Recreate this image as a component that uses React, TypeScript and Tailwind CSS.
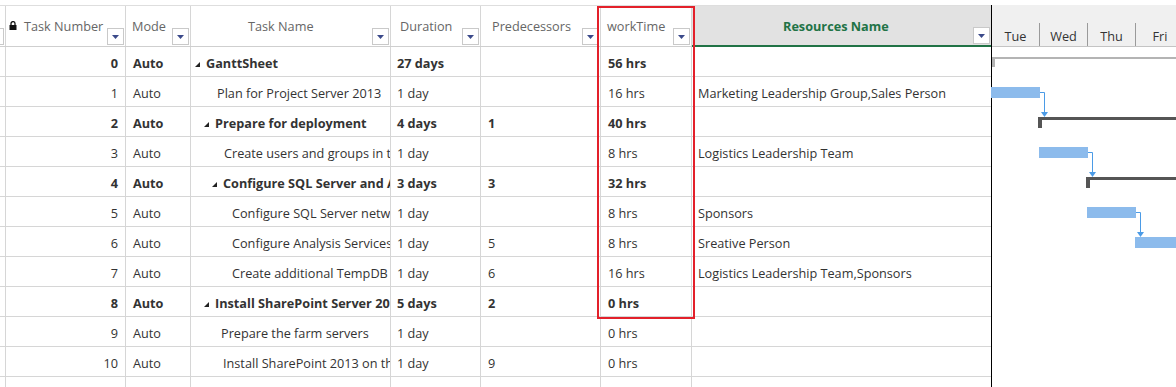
import React from "react";

type Row = {
  n: number;
  bold?: boolean;
  arrow?: boolean;
  name: string;
  pl: number;
  dur: string;
  pred: string;
  wt: string;
  res: string;
};

const rows: Row[] = [
  { n: 0, bold: true, arrow: true, name: "GanttSheet", pl: 17, dur: "27 days", pred: "", wt: "56 hrs", res: "" },
  { n: 1, name: "Plan for Project Server 2013", pl: 26, dur: "1 day", pred: "", wt: "16 hrs", res: "Marketing Leadership Group,Sales Person" },
  { n: 2, bold: true, arrow: true, name: "Prepare for deployment", pl: 26, dur: "4 days", pred: "1", wt: "40 hrs", res: "" },
  { n: 3, name: "Create users and groups in the Active Directory", pl: 33, dur: "1 day", pred: "", wt: "8 hrs", res: "Logistics Leadership Team" },
  { n: 4, bold: true, arrow: true, name: "Configure SQL Server and Analysis Services", pl: 34, dur: "3 days", pred: "3", wt: "32 hrs", res: "" },
  { n: 5, name: "Configure SQL Server network settings", pl: 41, dur: "1 day", pred: "", wt: "8 hrs", res: "Sponsors" },
  { n: 6, name: "Configure Analysis Services settings", pl: 41, dur: "1 day", pred: "5", wt: "8 hrs", res: "Sreative Person" },
  { n: 7, name: "Create additional TempDB files", pl: 41, dur: "1 day", pred: "6", wt: "16 hrs", res: "Logistics Leadership Team,Sponsors" },
  { n: 8, bold: true, arrow: true, name: "Install SharePoint Server 2013", pl: 26, dur: "5 days", pred: "2", wt: "0 hrs", res: "" },
  { n: 9, name: "Prepare the farm servers", pl: 30, dur: "1 day", pred: "", wt: "0 hrs", res: "" },
  { n: 10, name: "Install SharePoint 2013 on the farm servers", pl: 32, dur: "1 day", pred: "9", wt: "0 hrs", res: "" },
];

const FilterBtn = () => (
  <div className="w-[17px] h-[17px] border border-[#c9c9c9] bg-white flex items-center justify-center shrink-0 self-end mb-[1px] mr-[1px]">
    <svg width="7" height="4" viewBox="0 0 7 4" className="mt-[1px]">
      <polygon points="0,0 7,0 3.5,4" fill="#3b4a8a" />
    </svg>
  </div>
);

const Arrow = () => (
  <svg width="5" height="5" viewBox="0 0 5 5" className="shrink-0 mr-[6px] mt-[1px]">
    <polygon points="5,0 5,5 0,5" fill="#222" />
  </svg>
);

const Lock = () => (
  <svg width="8" height="9" viewBox="0 0 8 9" className="shrink-0 mr-[7px] -mt-[3px]">
    <path d="M2,4 V2.6 A2,2 0 0 1 6,2.6 V4" fill="none" stroke="#111" strokeWidth="1.3" />
    <rect x="0.5" y="4" width="7" height="5" fill="#111" />
  </svg>
);

const cellBase = "h-full border-r border-[#d6d6d6] flex items-center overflow-hidden whitespace-nowrap pt-[4px]";

export default function App() {
  return (
    <div
      className="w-[1176px] h-[387px] bg-white overflow-hidden text-[12.7px] text-[#333] relative"
      style={{ fontFamily: '"Segoe UI", "Open Sans", "Noto Sans", sans-serif' }}
    >
      <div className="h-[5px]" />
      <div className="flex">
        {/* Grid */}
        <div className="w-[991px] shrink-0">
          {/* header */}
          <div className="flex h-[42px] border-t border-[#dedede] border-b border-b-[#cfcfcf] text-[#666]">
            <div className="w-[6px] border-r border-[#d6d6d6] flex items-end">
              <div className="w-[4px] h-[17px] border border-l-0 border-[#c9c9c9] mb-[1px]" />
            </div>
            <div className="w-[120px] border-r border-[#d6d6d6] flex">
              <div className="flex-1 flex items-center pl-[3px] pt-[2px]">
                <Lock />
                <span>Task Number</span>
              </div>
              <FilterBtn />
            </div>
            <div className="w-[65px] border-r border-[#d6d6d6] flex">
              <div className="flex-1 flex items-center pl-[6px] pt-[2px]">Mode</div>
              <FilterBtn />
            </div>
            <div className="w-[200px] border-r border-[#d6d6d6] flex">
              <div className="flex-1 flex items-center pl-[57px] pt-[2px]">Task Name</div>
              <FilterBtn />
            </div>
            <div className="w-[90px] border-r border-[#d6d6d6] flex">
              <div className="flex-1 flex items-center pl-[9px] pt-[2px]">Duration</div>
              <FilterBtn />
            </div>
            <div className="w-[120px] border-r border-[#d6d6d6] flex">
              <div className="flex-1 flex items-center pl-[11px] pt-[2px]">Predecessors</div>
              <FilterBtn />
            </div>
            <div className="w-[91px] border-r border-[#d6d6d6] flex">
              <div className="flex-1 flex items-center pl-[6px] pt-[2px]">workTime</div>
              <FilterBtn />
            </div>
            <div className="w-[299px] bg-[#e2e2e2] flex border-b-2 border-[#217346] -mb-[1px]">
              <div className="flex-1 flex items-center pl-[91px] pt-[2px] font-bold text-[#217346]">Resources Name</div>
              <FilterBtn />
            </div>
          </div>
          {/* rows */}
          {rows.map((r) => (
            <div
              key={r.n}
              className={`flex h-[30px] border-b border-[#d6d6d6] ${r.bold ? "font-bold" : ""}`}
            >
              <div className={`w-[6px] ${cellBase}`} />
              <div className={`w-[120px] ${cellBase} justify-end pr-[7px]`}>{r.n}</div>
              <div className={`w-[65px] ${cellBase} pl-[7px]`}>Auto</div>
              <div className={`w-[200px] ${cellBase}`} style={{ paddingLeft: r.arrow ? r.pl - 13 : r.pl }}>
                {r.arrow && <Arrow />}
                <span className="min-w-0 overflow-hidden whitespace-nowrap">{r.name}</span>
              </div>
              <div className={`w-[90px] ${cellBase} pl-[6px]`}>{r.dur}</div>
              <div className={`w-[120px] ${cellBase} pl-[7px]`}>{r.pred}</div>
              <div className={`w-[91px] ${cellBase} pl-[7px]`}>{r.wt}</div>
              <div className={`w-[299px] ${cellBase} pl-[6px] border-r-0 font-normal`}>{r.res}</div>
            </div>
          ))}
          <div className="flex h-[30px]">
            <div className="w-[6px] border-r border-[#d6d6d6]" />
            <div className="w-[120px] border-r border-[#d6d6d6]" />
            <div className="w-[65px] border-r border-[#d6d6d6]" />
            <div className="w-[200px] border-r border-[#d6d6d6]" />
            <div className="w-[90px] border-r border-[#d6d6d6]" />
            <div className="w-[120px] border-r border-[#d6d6d6]" />
            <div className="w-[91px] border-r border-[#d6d6d6]" />
            <div className="w-[299px]" />
          </div>
        </div>

        {/* Gantt */}
        <div className="flex-1 border-l border-black">
          <div className="h-[42px] bg-[#f0f0f0] border-t border-[#f0f0f0] border-b border-b-[#c4c4c4] flex flex-col">
            <div className="h-[20px]" />
            <div className="flex-1 flex text-[#333]">
              {["Tue", "Wed", "Thu", "Fri"].map((d, i) => (
                <div
                  key={d}
                  className={`w-[48px] shrink-0 flex items-center justify-center pt-[4px] ${i < 3 ? "border-r border-[#9a9a9a]" : ""}`}
                >
                  {d}
                </div>
              ))}
            </div>
          </div>
          <svg width="185" height="340" viewBox="0 0 185 340" className="block -ml-[1px]">
            <rect x="1" y="10" width="184" height="2" fill="#b4b4b4" />
            <rect x="1" y="10" width="3" height="10" fill="#b4b4b4" />
            <rect x="0" y="40" width="49" height="11" fill="#8cbbec" />
            <path d="M49,45.5 H53.5 V66" fill="none" stroke="#4b9be6" strokeWidth="1" />
            <polygon points="50,65 57,65 53.5,70" fill="#4b9be6" />
            <rect x="47" y="70" width="140" height="3" fill="#555555" />
            <rect x="47" y="70" width="4" height="11" fill="#555555" />
            <rect x="48" y="100" width="49" height="11" fill="#8cbbec" />
            <path d="M97,105.5 H101.5 V126" fill="none" stroke="#4b9be6" strokeWidth="1" />
            <polygon points="98,125 105,125 101.5,130" fill="#4b9be6" />
            <rect x="95" y="130" width="95" height="3" fill="#555555" />
            <rect x="95" y="130" width="4" height="11" fill="#555555" />
            <rect x="96" y="160" width="49" height="11" fill="#8cbbec" />
            <path d="M145,165.5 H149.5 V186" fill="none" stroke="#4b9be6" strokeWidth="1" />
            <polygon points="146,185 153,185 149.5,190" fill="#4b9be6" />
            <rect x="144" y="190" width="60" height="11" fill="#8cbbec" />
          </svg>
        </div>
      </div>

      {/* highlight overlay */}
      <div className="absolute left-[597px] top-[6px] w-[98px] h-[313px] border-2 border-[#e3202a] pointer-events-none" />
    </div>
  );
}
